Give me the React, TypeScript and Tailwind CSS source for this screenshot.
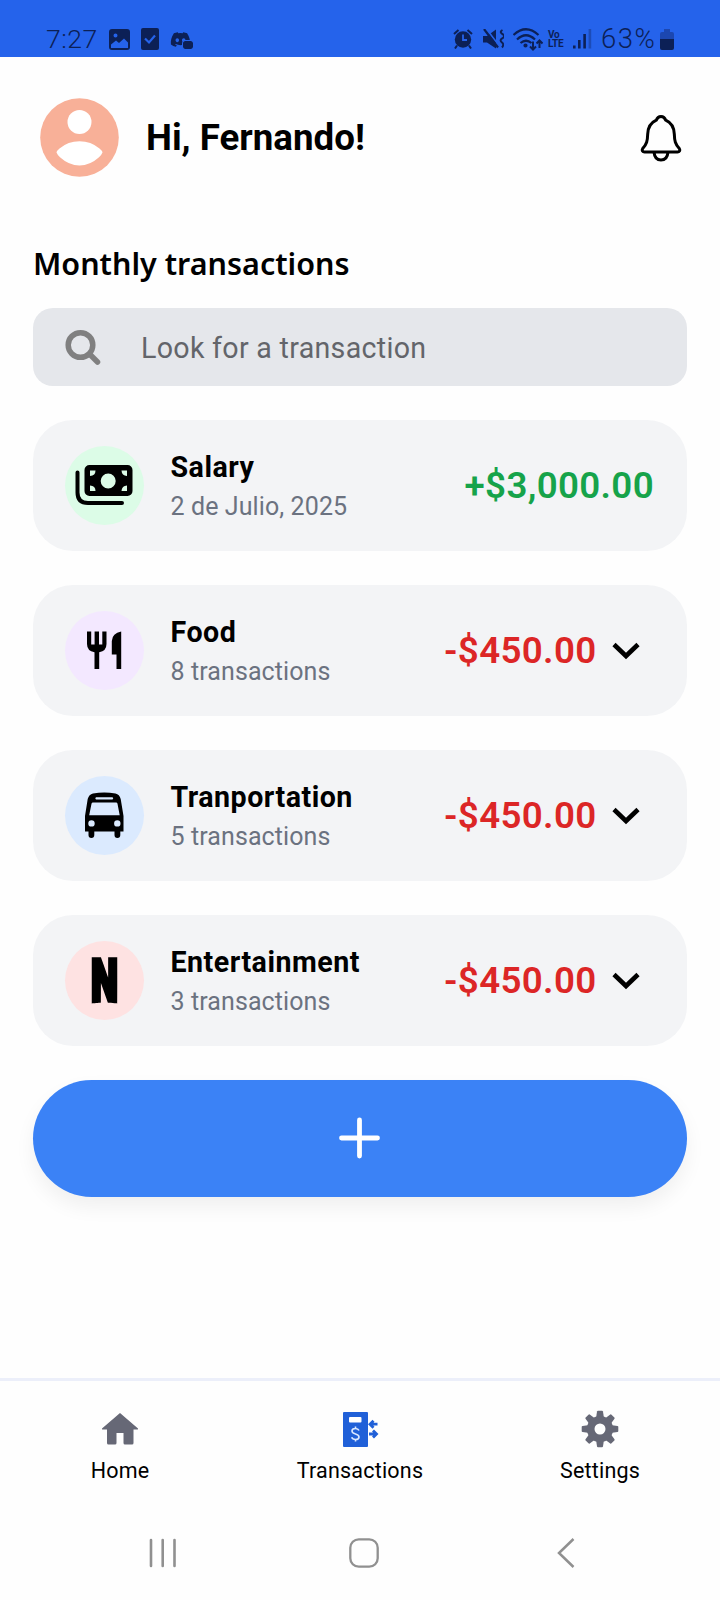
import type { ReactNode } from 'react';
import { FaDiscord } from 'react-icons/fa';
import { RiNetflixFill } from 'react-icons/ri';

interface Transaction {
  id: number;
  title: string;
  detail: string;
  amount: string;
  income?: boolean;
  circle: string;
  icon: ReactNode;
}

const CashIcon = () => (
  <svg width="79" height="79" viewBox="0 0 79 79">
    <path d="M12.5 26.5V46.5Q12.5 57 23 57H57" fill="none" stroke="black" strokeWidth="4" strokeLinecap="round" />
    <path
      fillRule="evenodd"
      d="M24.5 19h38a5 5 0 0 1 5 5v21a5 5 0 0 1-5 5h-38a5 5 0 0 1-5-5V24a5 5 0 0 1 5-5zM43.2 27.5a7.5 7.5 0 1 0 0 15a7.5 7.5 0 1 0 0-15zM25 24.5v5.5q5.5-.3 5.5-5.5zM62 24.5h-5.5q.3 5.2 5.5 5.5zM25 45v-5.5q5.500.3 5.5 5.5zM62 45h-5.5q.3-5.2 5.5-5.5z"
    />
  </svg>
);

const FoodIcon = () => (
  <svg width="79" height="79" viewBox="0 0 79 79">
    <path d="M22 20.500h4.200v13h3.400v-13h4.400v13h3.300v-13h4.200v12.500q0 7-7.300 8.300V58h-4.700V41.300Q22 40 22 33z" />
    <path d="M56.200 20.500V58h-4.700V43.500h-4.700V30q.5-8 9.400-9.500z" />
  </svg>
);

const BusIcon = () => (
  <svg width="79" height="79" viewBox="0 0 79 79">
    <path
      fillRule="evenodd"
      d="M20 55.500V40l2.700-17Q24 18.500 28 17.600Q39.200 15.500 50.500 17.600Q54.500 18.500 55.700 23L58.500 40v15.500h-3.200V59q0 3-2.900 3t-2.900-3v-3.500H29.300V59q0 3-2.900 3t-2.900-3v-3.500zM31 21.300q-1.500 1 0 2.200h16.500q1.500-1.200 0-2.200zM28 26.500q-1.300 0-1.500 1.300L24.200 39.300h30.500L52.500 27.800q-.2-1.300-1.500-1.300zM26.500 44.200a3.200 3.200 0 1 0 0 6.400a3.200 3.200 0 1 0 0-6.400zM52.300 44.200a3.200 3.200 0 1 0 0 6.400a3.200 3.200 0 1 0 0-6.400z"
    />
  </svg>
);

const transactions: Transaction[] = [
  { id: 1, title: 'Salary', detail: '2 de Julio, 2025', amount: '+$3,000.00', income: true, circle: 'bg-[#dcfce7]', icon: <CashIcon /> },
  { id: 2, title: 'Food', detail: '8 transactions', amount: '-$450.00', circle: 'bg-[#f3e8ff]', icon: <FoodIcon /> },
  { id: 3, title: 'Tranportation', detail: '5 transactions', amount: '-$450.00', circle: 'bg-[#dbeafe]', icon: <BusIcon /> },
  { id: 4, title: 'Entertainment', detail: '3 transactions', amount: '-$450.00', circle: 'bg-[#fee2e2]', icon: <RiNetflixFill size={51} color="black" className="mt-px" /> },
];

function StatusBar() {
  return (
    <div className="h-[57px] bg-[#2563eb] flex items-center justify-between pt-[21px] pl-[46px] pr-[46px] text-[#0c2056]">
      <div className="flex items-center">
        <span className="text-[26.5px] leading-none w-[62px] font-light tracking-[0.5px]">7:27</span>
        <svg width="21" height="21" viewBox="0 0 21 21" fill="currentColor" className="ml-[1px]">
          <path fillRule="evenodd" d="M3 0h15a3 3 0 0 1 3 3v15a3 3 0 0 1-3 3H3a3 3 0 0 1-3-3V3a3 3 0 0 1 3-3zM6.500 4.500a2 2 0 1 0 0 4a2 2 0 1 0 0-4zM2 15.500v3.500h17v-5.500l-4-4l-5 4.500l-3-2.500z" />
        </svg>
        <svg width="18" height="22" viewBox="0 0 18 22" className="ml-[11px]">
          <rect width="18" height="22" rx="2" fill="currentColor" />
          <path d="M4 10.500l4 4l6-7" fill="none" stroke="#2563eb" strokeWidth="2.200" />
        </svg>
        <div className="relative ml-[11px]">
          <FaDiscord size={21} />
          <span className="absolute right-[-2px] bottom-[1px] w-[10px] h-[8px] rounded-[2px] bg-[#0c2056] outline outline-1 outline-[#2563eb]" />
        </div>
      </div>

      <div className="flex items-center">
        <svg width="20" height="20" viewBox="0 0 20 20">
          <path d="M1 5l4.500-4M19 5l-4.500-4M4 16.500l-2 3M16 16.500l2 3" stroke="currentColor" strokeWidth="2" />
          <circle cx="10" cy="10.500" r="8.200" fill="currentColor" />
          <path d="M10 5.500v5.500h4" fill="none" stroke="#2563eb" strokeWidth="1.800" />
        </svg>
        <svg width="21" height="20" viewBox="0 0 21 20" className="ml-[10px]">
          <path d="M0 7h4l9-6.500v19L4 13.500H0z" fill="currentColor" />
          <path d="M3-.5l12 15.800" stroke="#2563eb" strokeWidth="1.800" />
          <path d="M1 0l14 18.500" stroke="currentColor" strokeWidth="2.200" />
          <path d="M19.500 1q-3.500 2 0 4.200t-1 4.600q-2 1.800.5 3.700t0 5" fill="none" stroke="currentColor" strokeWidth="2" />
        </svg>
        <svg width="30" height="23" viewBox="0 0 30 23" className="ml-[9px] mt-[1px]" fill="none" stroke="currentColor" strokeWidth="2.200">
          <path d="M.5 7Q13-4.500 25.500 7M4 11.500q9-8.500 18 0M7.500 15q5.500-4.500 11 0" />
          <path d="M20 13.500v8M17 18.500l3 3l3-3M26.500 20v-7.500M23.500 15.500l3-3l3 3" strokeWidth="2" />
          <circle cx="12.500" cy="17.500" r="1" />
        </svg>
        <div className="ml-[5px] w-[18px] text-[10px] leading-[9px] font-bold tracking-[-0.3px]">
          <div>Vo</div>
          <div>LTE</div>
        </div>
        <svg width="19" height="20" viewBox="0 0 19 20" className="ml-[7px]" fill="currentColor">
          <rect x="0" y="16.500" width="2.600" height="3" />
          <rect x="5" y="11" width="2.600" height="8.500" />
          <rect x="10.300" y="5" width="2.600" height="14.500" />
          <rect x="15.600" y="0" width="2.600" height="19.500" opacity=".35" />
        </svg>
        <span className="ml-[9px] w-[57px] text-[27.5px] leading-none font-light tracking-[1.5px]">63%</span>
        <svg width="14" height="21" viewBox="0 0 14 21" className="ml-[2px]">
          <path d="M4 0h6v3h2a2 2 0 0 1 2 2v6H0V5a2 2 0 0 1 2-2h2z" fill="#1c47b0" />
          <path d="M0 10h14v9a2 2 0 0 1-2 2H2a2 2 0 0 1-2-2z" fill="currentColor" />
        </svg>
      </div>
    </div>
  );
}

function Header() {
  return (
    <header className="flex items-center pt-[41px] pl-[40px] pr-[38px]">
      <svg width="79" height="79" viewBox="0 0 79 79">
        <circle cx="39.500" cy="39.500" r="39.300" fill="#f8b098" />
        <circle cx="39.500" cy="24" r="12" fill="white" />
        <path d="M16.500 54.500Q17 52.500 19.500 50.500Q28 43.200 39.500 43.200T59.500 50.500Q62 52.500 62.500 54.500Q61.500 57 59 59.300Q50 67.500 39.500 67.500T20 59.300Q17.500 57 16.500 54.500z" fill="white" />
      </svg>
      <h1 className="ml-[27px] pt-[2px] text-[36.7px] leading-none font-bold">Hi, Fernando!</h1>
      <svg width="42" height="48" viewBox="0 0 42 48" className="ml-auto" fill="none" stroke="black" strokeWidth="3" strokeLinejoin="round">
        <path d="M21 2.500q-3.500 0-4.700 3.700C10 9 8 13.500 7.700 20c-.2 7-1 10-5 14.500c-1.200 2 0 3.500 1.800 3.500h33c1.800 0 3-1.500 1.800-3.500c-4-4.500-4.800-7.500-5-14.500C34 13.500 32 9 25.700 6.200Q24.500 2.500 21 2.500z" />
        <path d="M14 38c.5 5.500 3.500 8 7 8s6.500-2.500 7-8" />
      </svg>
    </header>
  );
}

function TransactionCard({ item }: { item: Transaction }) {
  return (
    <div className="h-[131.5px] pl-8 pr-[33px] flex items-center rounded-[40px] bg-[#f3f4f6]">
      <div className={`w-[79px] h-[79px] shrink-0 rounded-full flex items-center justify-center ${item.circle}`}>
        {item.icon}
      </div>
      <div className="ml-[26.5px] flex-1 pt-[4px]">
        <p className="text-[28.6px] leading-[40px] font-bold tracking-[0.5px]">{item.title}</p>
        <p className="text-[25px] leading-[40px] tracking-[0.1px] text-[#6b7280]">{item.detail}</p>
      </div>
      <span
        className={
          item.income
            ? 'text-[36.7px] font-semibold tracking-[0.35px] text-[#16a34a]'
            : 'text-[36.7px] font-semibold tracking-[0.35px] text-[#dc2626]'
        }
      >
        {item.amount}
      </span>
      {!item.income && (
        <svg width="28" height="18" viewBox="0 0 28 18" className="ml-[15px] mr-[14.5px] mt-[2px]">
          <path d="M2 2.500l12 11.500L26 2.500" fill="none" stroke="black" strokeWidth="4.600" />
        </svg>
      )}
    </div>
  );
}

const HomeIcon = () => (
  <svg width="38" height="38" viewBox="0 0 38 38" fill="#666876">
    <path d="M19 3L37 18.500q.5 1-.5 1H32.500V33q0 1.500-1.500 1.500H24q-1.500 0-1.500-1.500V23h-7v10q0 1.500-1.500 1.500H7.500Q6 34.500 6 33V19.500H1.500q-1 0-.5-1z" />
  </svg>
);

const TransactionsIcon = () => (
  <svg width="38" height="38" viewBox="0 0 38 38">
    <rect x="2" y="2" width="25" height="35" rx="1" fill="#2060d8" />
    <rect x="8" y="7" width="12.500" height="5.500" rx="1" fill="white" />
    <path d="M18 20.500q-.8-2-3.600-2q-3.400 0-3.400 2.500q0 2 3.500 2.900t3.500 3q0 2.600-3.500 2.600q-3 0-3.800-2.200M14.500 16.500v2M14.500 29.500v2" fill="none" stroke="#dbe8ff" strokeWidth="1.600" />
    <path d="M36.500 14.200h-6M32.500 10.700l-3.500 3.500l3.500 3.500M28 24h6M32 20.500l3.500 3.500l-3.500 3.500" fill="none" stroke="#2060d8" strokeWidth="2.800" />
  </svg>
);

const SettingsIcon = () => (
  <svg width="38" height="38" viewBox="0 0 38 38">
    {[0, 45, 90, 135, 180, 225, 270, 315].map((angle) => (
      <path key={angle} d="M15 8.500L16 1.500q.2-.8 1-.8h4q.8 0 1 .8L23 8.500z" fill="#666876" transform={`rotate(${angle} 19 19)`} />
    ))}
    <circle cx="19" cy="19" r="9.300" fill="none" stroke="#666876" strokeWidth="7.600" />
  </svg>
);

function TabItem({ label, icon }: { label: string; icon: ReactNode }) {
  return (
    <button className="w-60 flex flex-col items-center">
      {icon}
      <span className="mt-[9px] text-[21.5px] leading-[28px] tracking-[0.2px]">{label}</span>
    </button>
  );
}

export default function App() {
  return (
    <div className="w-[720px] h-[1600px] overflow-hidden flex flex-col bg-[#fefefe] text-black font-[Roboto,sans-serif]">
      <StatusBar />
      <Header />

      {/* Monthly list */}
      <main className="flex-1 px-[33px] pt-[63px]">
        <h2 className="h-[46px] text-[30.5px] leading-[46px] font-semibold font-['Noto_Sans',sans-serif]">Monthly transactions</h2>

        <div className="mt-[22px] h-[78px] pl-8 flex items-center rounded-[20px] bg-[#e5e7eb]">
          <svg width="38" height="38" viewBox="0 0 38 38" fill="none" stroke="#808080" className="mt-[2px]">
            <circle cx="15.500" cy="16" r="12.300" strokeWidth="5.500" />
            <path d="M24.500 25l8 8" strokeWidth="5.500" strokeLinecap="round" />
          </svg>
          <span className="ml-[38px] pt-[2px] text-[28.6px] tracking-[0.3px] text-[#63656a]">Look for a transaction</span>
        </div>

        <div className="mt-[33.5px] flex flex-col gap-[33.5px]">
          {transactions.map((item) => (
            <TransactionCard key={item.id} item={item} />
          ))}
        </div>

        <button className="mt-[34px] w-full h-[117px] rounded-full bg-[#3b82f6] flex items-center justify-center shadow-[0_10px_20px_rgba(0,0,0,0.06)]">
          <svg width="42" height="42" viewBox="0 0 42 42" className="-mt-px">
            <path d="M20.500 3v36M2.500 21h36" stroke="white" strokeWidth="4.800" strokeLinecap="round" />
          </svg>
        </button>
      </main>

      {/* Bottom tabs */}
      <nav className="h-[131px] flex border-t-[3px] border-[#eceffa] pt-[29px]">
        <TabItem label="Home" icon={<HomeIcon />} />
        <TabItem label="Transactions" icon={<TransactionsIcon />} />
        <TabItem label="Settings" icon={<SettingsIcon />} />
      </nav>

      {/* Android navigation */}
      <div className="h-[91px] pt-[29px] pl-[149px] flex">
        <svg width="28" height="30" viewBox="0 0 28 30">
          <path d="M2 2v26M13.700 2v26M25.500 2v26" stroke="#909090" strokeWidth="2.600" strokeLinecap="round" />
        </svg>
        <svg width="30" height="30" viewBox="0 0 30 30" className="ml-[172px]">
          <rect x="1.300" y="1.300" width="27.400" height="27.400" rx="8.500" fill="none" stroke="#909090" strokeWidth="2.300" />
        </svg>
        <svg width="18" height="30" viewBox="0 0 18 30" className="ml-[178px]">
          <path d="M16.500 1L2 15l14.500 14" fill="none" stroke="#909090" strokeWidth="2.500" />
        </svg>
      </div>
    </div>
  );
}
